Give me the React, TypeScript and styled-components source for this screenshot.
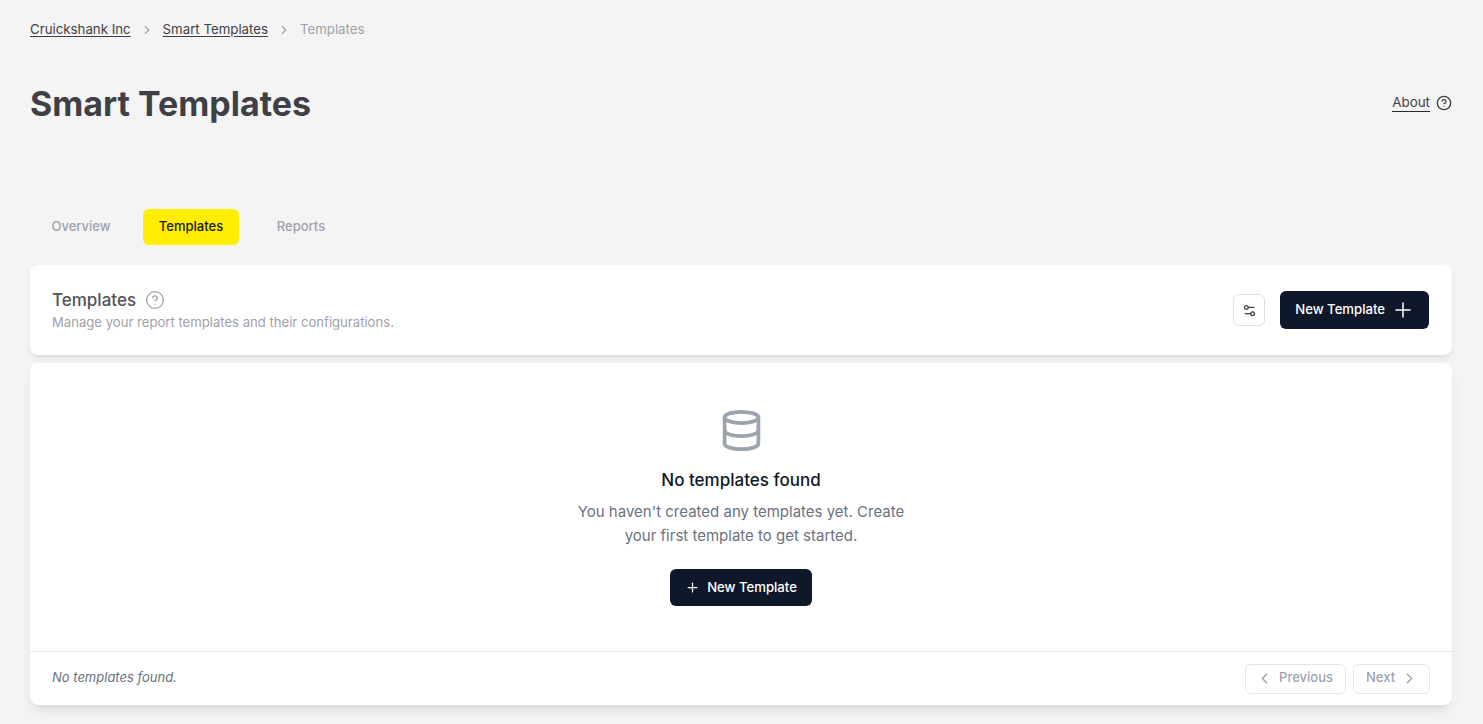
import React from "react";
import styled, { createGlobalStyle } from "styled-components";
import {
  ChevronLeft,
  ChevronRight,
  CircleHelp,
  Database,
  Plus,
  Settings2,
} from "lucide-react";

const GlobalStyle = createGlobalStyle`
  html, body {
    margin: 0;
    padding: 0;
    background: #f4f4f4;
    font-family: Inter, "Liberation Sans", sans-serif;
    color: #3f3f46;
  }
  * {
    box-sizing: border-box;
  }
`;

const Page = styled.div`
  display: flex;
  flex-direction: column;
  min-height: 724px;
  padding: 20px 31px 0 30px;
`;

const Breadcrumbs = styled.nav`
  display: flex;
  align-items: center;
  height: 19px;
  font-size: 13.25px;
  line-height: 19px;
`;

const Crumb = styled.a`
  color: #3f3f46;
  text-decoration: underline;
  text-underline-offset: 2px;
`;

const CurrentCrumb = styled.span`
  color: #a1a1aa;
`;

const CrumbSeparator = styled.span`
  display: flex;
  justify-content: center;
  width: 32px;
  color: #a1a1aa;
`;

const TitleRow = styled.header`
  display: flex;
  align-items: center;
  justify-content: space-between;
  margin-top: 43px;
  height: 44px;
`;

const Title = styled.h1`
  margin: 0;
  font-size: 34px;
  line-height: 44px;
  font-weight: 700;
  color: #3f3f46;
`;

const AboutLink = styled.a`
  display: flex;
  align-items: center;
  gap: 6px;
  margin-bottom: 2px;
  font-size: 13.4px;
  color: #3f3f46;
`;

const AboutLabel = styled.span`
  border-bottom: 1px solid #27272a;
  line-height: 17px;
`;

const Tabs = styled.div`
  display: grid;
  grid-template-columns: repeat(3, 96px);
  column-gap: 14px;
  margin-top: 83px;
  padding-left: 3px;
  height: 36px;
`;

const Tab = styled.button<{ $active?: boolean }>`
  height: 36px;
  padding: 0 0 2px;
  border: 0;
  border-radius: 6px;
  font-family: inherit;
  font-size: 13px;
  font-weight: 500;
  background: ${({ $active }) => ($active ? "#ffee00" : "transparent")};
  color: ${({ $active }) => ($active ? "#18181b" : "#a1a1aa")};
`;

const Card = styled.section`
  background: #ffffff;
  border-radius: 8px;
  box-shadow: 0 4px 8px -2px rgba(0, 0, 0, 0.1), 0 2px 4px -2px rgba(0, 0, 0, 0.06);
`;

const HeaderCard = styled(Card)`
  display: flex;
  align-items: center;
  justify-content: space-between;
  height: 90px;
  margin-top: 20px;
  padding: 0 23px 0 22px;
`;

const HeaderText = styled.div`
  display: flex;
  flex-direction: column;
`;

const HeadingRow = styled.div`
  display: flex;
  align-items: center;
  gap: 9px;
  color: #a1a1aa;
`;

const CardTitle = styled.h2`
  margin: 0;
  font-size: 17px;
  line-height: 22px;
  font-weight: 500;
  color: #52525b;
`;

const CardSubtitle = styled.p`
  margin: 2px 0 0;
  font-size: 13.12px;
  line-height: 18px;
  color: #a1a1aa;
`;

const HeaderActions = styled.div`
  display: flex;
  align-items: center;
  gap: 15px;
`;

const IconButton = styled.button`
  display: flex;
  align-items: center;
  justify-content: center;
  width: 32px;
  height: 32px;
  padding: 0;
  background: #ffffff;
  border: 1px solid #e0e0e3;
  border-radius: 6px;
  color: #3f3f46;
`;

const PrimaryButton = styled.button<{ $trailing?: boolean }>`
  display: flex;
  align-items: center;
  justify-content: center;
  gap: ${({ $trailing }) => ($trailing ? "6px" : "7px")};
  height: ${({ $trailing }) => ($trailing ? "38px" : "37px")};
  padding: ${({ $trailing }) => ($trailing ? "0 14px 0 15px" : "0 15px")};
  background: #0f172a;
  border: 0;
  border-radius: 6px;
  font-family: inherit;
  font-size: 13.15px;
  font-weight: 500;
  color: #ffffff;
`;

const ButtonLabel = styled.span`
  padding-bottom: 2px;
`;

const ListCard = styled(Card)`
  display: flex;
  flex-direction: column;
  height: 342px;
  margin-top: 8px;
  box-shadow: 0 8px 14px -4px rgba(0, 0, 0, 0.12), 0 2px 4px -2px rgba(0, 0, 0, 0.06);
`;

const EmptyState = styled.div`
  flex: 1;
  display: flex;
  flex-direction: column;
  align-items: center;
  padding-top: 45px;
  color: #9ca3af;
`;

const EmptyTitle = styled.h3`
  margin: 15px 0 0;
  font-size: 17px;
  line-height: 24px;
  font-weight: 500;
  color: #111827;
`;

const EmptyText = styled.p`
  margin: 8px 0 21px;
  width: 340px;
  font-size: 15px;
  line-height: 24px;
  text-align: center;
  color: #6b7280;
`;

const Footer = styled.footer`
  display: flex;
  align-items: center;
  justify-content: space-between;
  height: 54px;
  padding: 0 22px;
  border-top: 1px solid #e5e7eb;
`;

const FooterNote = styled.span`
  padding-bottom: 4px;
  font-size: 13px;
  font-style: italic;
  color: #6b7280;
`;

const Pager = styled.div`
  display: flex;
  gap: 7px;
`;

const PagerButton = styled.button<{ $iconFirst?: boolean }>`
  display: flex;
  align-items: center;
  gap: 6px;
  min-width: 77px;
  height: 30px;
  padding: ${({ $iconFirst }) => ($iconFirst ? "0 12px 0 10px" : "0 10px 0 12px")};
  background: #ffffff;
  border: 1px solid #e5e7eb;
  border-radius: 6px;
  font-family: inherit;
  font-size: 13px;
  font-weight: 500;
  color: #9ca3af;
`;

const PagerLabel = styled.span`
  padding-bottom: 4px;
`;

export default function App() {
  return (
    <>
      <GlobalStyle />
      <Page>
        <Breadcrumbs>
          <Crumb>Cruickshank Inc</Crumb>
          <CrumbSeparator>
            <ChevronRight size={14} />
          </CrumbSeparator>
          <Crumb>Smart Templates</Crumb>
          <CrumbSeparator>
            <ChevronRight size={14} />
          </CrumbSeparator>
          <CurrentCrumb>Templates</CurrentCrumb>
        </Breadcrumbs>

        <TitleRow>
          <Title>Smart Templates</Title>
          <AboutLink>
            <AboutLabel>About</AboutLabel>
            <CircleHelp size={16} />
          </AboutLink>
        </TitleRow>

        <Tabs>
          <Tab>Overview</Tab>
          <Tab $active>Templates</Tab>
          <Tab>Reports</Tab>
        </Tabs>

        <HeaderCard>
          <HeaderText>
            <HeadingRow>
              <CardTitle>Templates</CardTitle>
              <CircleHelp size={20} strokeWidth={1.5} />
            </HeadingRow>
            <CardSubtitle>
              Manage your report templates and their configurations.
            </CardSubtitle>
          </HeaderText>
          <HeaderActions>
            <IconButton aria-label="Filters">
              <Settings2 size={15} />
            </IconButton>
            <PrimaryButton $trailing>
              <ButtonLabel>New Template</ButtonLabel>
              <Plus size={24} strokeWidth={1.5} />
            </PrimaryButton>
          </HeaderActions>
        </HeaderCard>

        <ListCard>
          <EmptyState>
            <Database size={45} />
            <EmptyTitle>No templates found</EmptyTitle>
            <EmptyText>
              You haven't created any templates yet. Create your first template
              to get started.
            </EmptyText>
            <PrimaryButton>
              <Plus size={15} />
              <ButtonLabel>New Template</ButtonLabel>
            </PrimaryButton>
          </EmptyState>
          <Footer>
            <FooterNote>No templates found.</FooterNote>
            <Pager>
              <PagerButton $iconFirst>
                <ChevronLeft size={17} />
                <PagerLabel>Previous</PagerLabel>
              </PagerButton>
              <PagerButton>
                <PagerLabel>Next</PagerLabel>
                <ChevronRight size={17} />
              </PagerButton>
            </Pager>
          </Footer>
        </ListCard>
      </Page>
    </>
  );
}
